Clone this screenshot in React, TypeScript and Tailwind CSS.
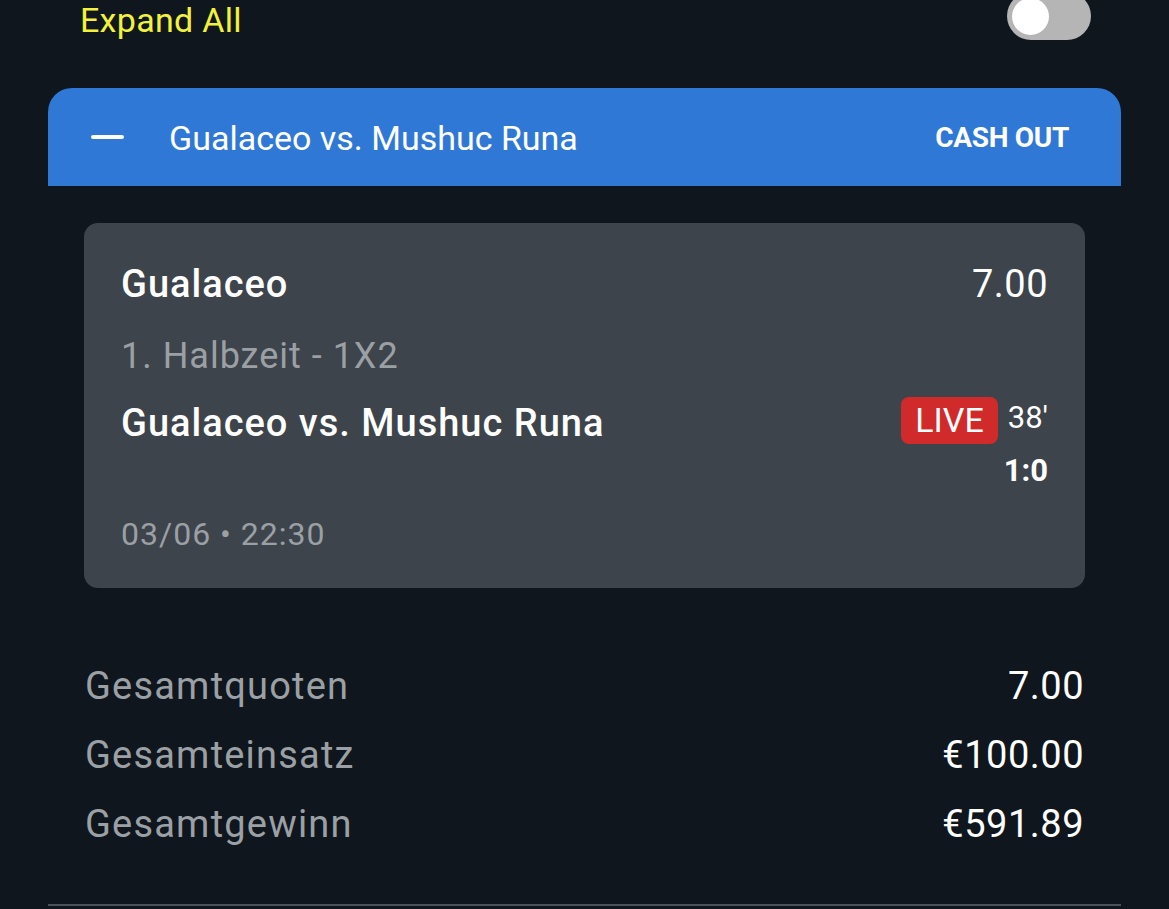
import { useState } from 'react';

const totals = [
  { label: 'Gesamtquoten', value: '7.00' },
  { label: 'Gesamteinsatz', value: '€100.00' },
  { label: 'Gesamtgewinn', value: '€591.89' },
];

function Toggle({ on, onChange }: { on: boolean; onChange: (v: boolean) => void }) {
  return (
    <button
      type="button"
      onClick={() => onChange(!on)}
      className={`-mt-[8px] flex h-[48px] w-[84px] items-center rounded-full px-[5px] ${on ? 'bg-[#2f78d6]' : 'bg-[#b5b5b5]'}`}
    >
      <span
        className={`block h-[37px] w-[37px] rounded-full bg-white transition-transform ${on ? 'translate-x-[37px]' : ''}`}
      />
    </button>
  );
}

function BetCard() {
  return (
    <div className="mx-[36px] mt-[37px] rounded-[14px] bg-[#3e444b] px-[37px] pb-[32px] pt-[38px]">
      <div className="flex items-start justify-between text-[38px] leading-[46px] text-white">
        <span className="font-medium tracking-[1px]">Gualaceo</span>
        <span className="tracking-[0.5px]">7.00</span>
      </div>
      <div className="mt-[26px] text-[36px] leading-[46px] tracking-[1px] text-[#9ba0a5]">1. Halbzeit - 1X2</div>
      <div className="mt-[18px] flex items-start justify-between">
        <span className="text-[38px] leading-[52px] font-medium tracking-[1px] text-white">
          Gualaceo vs. Mushuc Runa
        </span>
        <div className="flex flex-col items-end">
          <div className="flex items-center gap-[10px]">
            <span className="flex h-[47px] items-center rounded-[8px] bg-[#d12a2a] px-[14px] text-[34px] text-white">
              LIVE
            </span>
            <span className="-mt-[6px] text-[31px] leading-[47px] text-white">38'</span>
          </div>
          <span className="mt-[5px] text-[31px] leading-[44px] font-bold text-white">1:0</span>
        </div>
      </div>
      <div className="mt-[19px] text-[32px] leading-[44px] tracking-[1px] text-[#9ba0a5]">03/06 • 22:30</div>
    </div>
  );
}

export default function App() {
  const [expanded, setExpanded] = useState(false);

  return (
    <main className="min-h-screen overflow-hidden bg-[#0f161d] font-['Roboto',sans-serif]">
      <div className="mx-[48px]">
        <div className="flex h-[40px] items-start justify-between pl-[32px] pr-[30px]">
          <span className="text-[34px] leading-[40px] tracking-[0.3px] text-[#f2f23a]">Expand All</span>
          <Toggle on={expanded} onChange={setExpanded} />
        </div>

        <section className="mt-[48px]">
          <div className="flex h-[98px] items-center rounded-t-[24px] bg-[#2f78d6] pl-[43px] pr-[52px]">
            <span className="block h-[4px] w-[33px] rounded-full bg-white" />
            <span className="ml-[45px] pt-[2px] text-[34px] leading-[42px] text-white">
              Gualaceo vs. Mushuc Runa
            </span>
            <span className="ml-auto pt-[2px] text-[28px] font-bold leading-[40px] tracking-[-0.3px] text-white">
              CASH OUT
            </span>
          </div>

          <BetCard />

          <div className="mt-[64px] px-[37px]">
            {totals.map((row) => (
              <div key={row.label} className="flex h-[69px] items-center justify-between text-[38px]">
                <span className="tracking-[1.2px] text-[#9ba0a5]">{row.label}</span>
                <span className="tracking-[0.5px] text-white">{row.value}</span>
              </div>
            ))}
          </div>

          <div className="mt-[45px] h-[2px] bg-[#4b5259]" />
        </section>
      </div>
    </main>
  );
}
